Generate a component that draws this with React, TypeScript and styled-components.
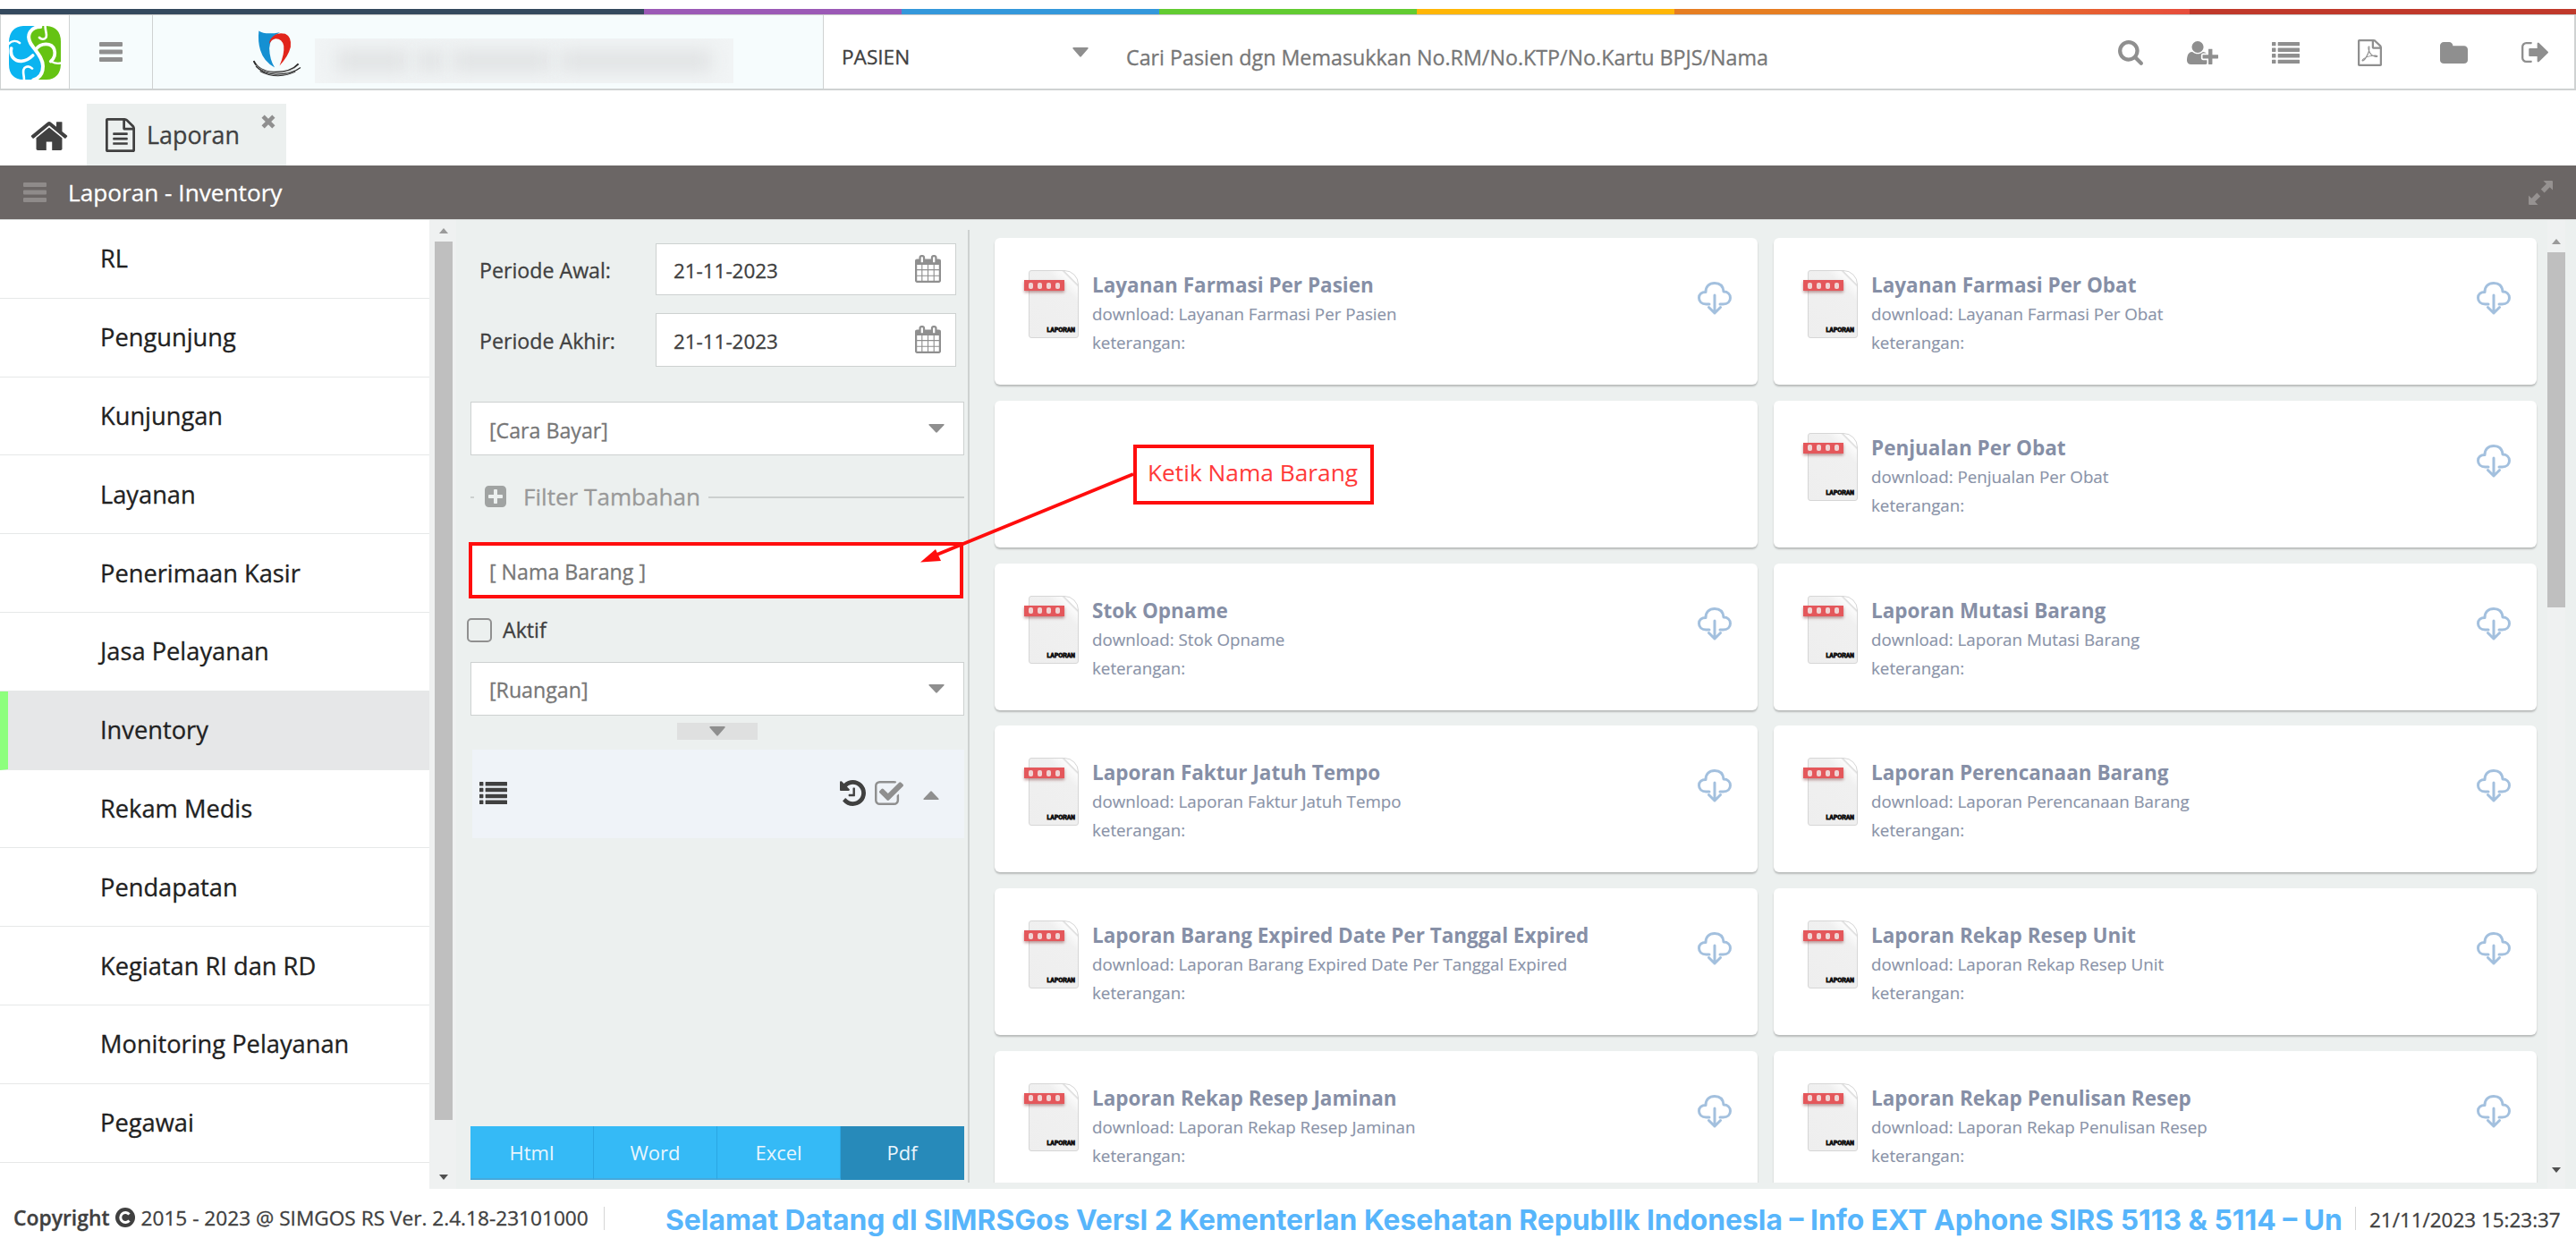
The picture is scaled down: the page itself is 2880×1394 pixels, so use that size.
import React from "react";
import styled, { createGlobalStyle } from "styled-components";

const Global = createGlobalStyle`
  *, *::before, *::after { box-sizing: border-box; }
  html, body { margin: 0; padding: 0; background: #fff; }
  body {
    font-family: "Open Sans", "Noto Sans", sans-serif;
    color: #404040;
    overflow: hidden;
    -webkit-text-stroke: 0.3px;
  }
`;

/* ---------- icons ---------- */

const PAGE =
  "M1596 380q28 28 48 76t20 88v1152q0 40-28 68t-68 28h-1344q-40 0-68-28t-28-68v-1600q0-40 28-68t68-28h896q40 0 88 20t76 48zm-444-244v376h376q-10-29-22-41l-313-313q-12-12-41-22zm384 1528v-1024h-416q-40 0-68-28t-28-68v-416h-768v1536h1280z";

const glyphs = {
  home: {
    box: "60 210 1672 1326",
    d: "M1472 992v480q0 26-19 45t-45 19h-384v-384h-256v384h-384q-26 0-45-19t-19-45v-480q0-1 .5-3t.5-3l575-474 575 474q1 2 1 6zm223-69l-62 74q-8 9-21 11h-3q-13 0-21-7l-692-577-692 577q-12 8-24 7-13-2-21-11l-62-74q-8-10-7-23.5t11-21.5l719-599q32-26 76-26t76 26l244 204v-195q0-14 9-23t23-9h192q14 0 23 9t9 23v408l219 182q10 8 11 21.5t-7 23.5z",
  },
  fileText: {
    box: "128 0 1536 1792",
    d:
      PAGE +
      "M512 800q0-14 9-23t23-9h704q14 0 23 9t9 23v64q0 14-9 23t-23 9h-704q-14 0-23-9t-9-23v-64zm736 224q14 0 23 9t9 23v64q0 14-9 23t-23 9h-704q-14 0-23-9t-9-23v-64q0-14 9-23t23-9h704zm0 256q14 0 23 9t9 23v64q0 14-9 23t-23 9h-704q-14 0-23-9t-9-23v-64q0-14 9-23t23-9h704z",
  },
  filePdf: {
    box: "128 0 1536 1792",
    d:
      PAGE +
      "M1022 1001q33 26 84 56 59-7 117-7 147 0 177 49 16 22 2 52 0 1-1 2l-2 2v1q-6 38-71 38-48 0-115-20t-130-53q-221 24-392 83-153 262-242 262-15 0-28-7l-24-12q-1-1-6-5-10-10-6-36 9-40 56-91.5t132-96.5q14-9 23 6 2 2 2 4 52-85 107-197 68-136 104-262-24-82-30.5-159.5t6.5-127.5q11-40 42-40h22q23 0 35 15 18 21 9 68-2 6-4 8 1 3 1 8v30q-2 123-14 192 55 164 146 238zm-576 411q52-24 137-158-51 40-87.5 84t-49.5 74zm398-920q-15 42-2 132 1-7 7-44 0-3 7-43 1-4 4-8-1-1-1-2-1-2-1-3-1-22-13-36 0 1-1 2v2zm-124 661q135-54 284-81-2-1-13-9.5t-16-13.5q-76-67-127-176-27 86-83 197-30 56-45 83zm646-16q-24-24-140-24 76 28 124 28 14 0 18-1 0-1-2-3z",
  },
  search: {
    box: "64 128 1664 1664",
    d: "M1216 832q0-185-131.5-316.5t-316.5-131.5-316.5 131.5-131.5 316.5 131.5 316.5 316.5 131.5 316.5-131.5 131.5-316.5zm512 832q0 52-38 90t-90 38q-54 0-90-38l-343-342q-179 124-399 124-143 0-273.5-55.5t-225-150-150-225-55.5-273.5 55.5-273.5 150-225 225-150 273.5-55.5 273.5 55.5 225 150 150 225 55.5 273.5q0 220-124 399l343 343q37 37 37 90z",
  },
  userPlus: {
    box: "0 128 2048 1536",
    d: "M704 896q-159 0-271.5-112.5t-112.5-271.5 112.5-271.5 271.5-112.5 271.5 112.5 112.5 271.5-112.5 271.5-271.5 112.5zm960 128h352q13 0 22.5 9.5t9.5 22.5v192q0 13-9.5 22.5t-22.5 9.5h-352v352q0 13-9.5 22.5t-22.5 9.5h-192q-13 0-22.5-9.5t-9.5-22.5v-352h-352q-13 0-22.5-9.5t-9.5-22.5v-192q0-13 9.5-22.5t22.5-9.5h352v-352q0-13 9.5-22.5t22.5-9.5h192q13 0 22.5 9.5t9.5 22.5v352zm-736 224q0 52 38 90t90 38h256v238q-68 50-171 50h-874q-121 0-194-69t-73-190q0-53 3.5-103.5t14-109 26.5-108.5 43-97.5 62-81 85.5-53.5 111.5-20q19 0 39 17 79 61 154.5 91.5t164.5 30.5 164.5-30.5 154.5-91.5q20-17 39-17 132 0 217 96h-223q-52 0-90 38t-38 90v192z",
  },
  list: {
    box: "0 128 1792 1408",
    d: "M32 128h192q32 0 32 32v192q0 32-32 32h-192q-32 0-32-32v-192q0-32 32-32zM32 512h192q32 0 32 32v192q0 32-32 32h-192q-32 0-32-32v-192q0-32 32-32zM32 896h192q32 0 32 32v192q0 32-32 32h-192q-32 0-32-32v-192q0-32 32-32zM32 1280h192q32 0 32 32v192q0 32-32 32h-192q-32 0-32-32v-192q0-32 32-32zM416 128h1344q32 0 32 32v192q0 32-32 32h-1344q-32 0-32-32v-192q0-32 32-32zM416 512h1344q32 0 32 32v192q0 32-32 32h-1344q-32 0-32-32v-192q0-32 32-32zM416 896h1344q32 0 32 32v192q0 32-32 32h-1344q-32 0-32-32v-192q0-32 32-32zM416 1280h1344q32 0 32 32v192q0 32-32 32h-1344q-32 0-32-32v-192q0-32 32-32z",
  },
  folder: {
    box: "64 128 1664 1408",
    d: "M1728 608v704q0 92-66 158t-158 66h-1216q-92 0-158-66t-66-158v-960q0-92 66-158t158-66h320q92 0 158 66t66 158v32h672q92 0 158 66t66 158z",
  },
  signOut: {
    box: "64 256 1632 1280",
    d: "M704 1440q0 96-32 96h-320q-119 0-203.5-84.5t-84.5-203.5v-704q0-119 84.5-203.5t203.5-84.5h320q32 0 32 32 0 96-32 96h-320q-66 0-113 47t-47 113v704q0 66 47 113t113 47h320q32 0 32 32zm992-544q0 26-19 45l-544 544q-19 19-45 19t-45-19-19-45v-288h-448q-26 0-45-19t-19-45v-384q0-26 19-45t45-19h448v-288q0-26 19-45t45-19 45 19l544 544q19 19 19 45z",
  },
  calendar: {
    box: "64 0 1664 1792",
    d: "M192 1664h288v-288h-288v288zm352 0h320v-288h-320v288zm-352-352h288v-320h-288v320zm352 0h320v-320h-320v320zm-352-384h288v-288h-288v288zm736 736h320v-288h-320v288zm-384-736h320v-288h-320v288zm768 736h288v-288h-288v288zm-384-352h320v-320h-320v320zm-352-864v-288q0-13-9.5-22.5t-22.5-9.5h-64q-13 0-22.5 9.5t-9.5 22.5v288q0 13 9.5 22.5t22.5 9.5h64q13 0 22.5-9.5t9.5-22.5zm736 864h288v-320h-288v320zm-384-384h320v-288h-320v288zm384 0h288v-288h-288v288zm32-480v-288q0-13-9.5-22.5t-22.5-9.5h-64q-13 0-22.5 9.5t-9.5 22.5v288q0 13 9.5 22.5t22.5 9.5h64q13 0 22.5-9.5t9.5-22.5zm384-64v1280q0 52-38 90t-90 38h-1408q-52 0-90-38t-38-90v-1280q0-52 38-90t90-38h128v-96q0-66 47-113t113-47h64q66 0 113 47t47 113v96h384v-96q0-66 47-113t113-47h64q66 0 113 47t47 113v96h128q52 0 90 38t38 90z",
  },
  history: {
    box: "128 128 1536 1536",
    d: "M1664 896q0 156-61 298t-164 245-245 164-298 61q-172 0-327-72.5t-264-204.5q-7-10-6.5-22.5t8.5-20.5l137-138q10-9 25-9 16 2 23 12 73 95 179 147t225 52q104 0 198.5-40.5t163.5-109.5 109.5-163.5 40.5-198.5-40.5-198.5-109.5-163.5-163.5-109.5-198.5-40.5q-98 0-188 35.5t-160 101.5l137 138q31 30 14 69-17 40-59 40h-448q-26 0-45-19t-19-45v-448q0-42 40-59 39-17 69 14l130 129q107-101 244.5-156.5t284.5-55.5q156 0 298 61t245 164 164 245 61 298zm-640-288v448q0 14-9 23t-23 9h-320q-14 0-23-9t-9-23v-64q0-14 9-23t23-9h224v-352q0-14 9-23t23-9h64q14 0 23 9t9 23z",
  },
  checkSquare: {
    box: "64 128 1663 1408",
    d: "M1472 930v318q0 119-84.5 203.5t-203.5 84.5h-832q-119 0-203.5-84.5t-84.5-203.5v-832q0-119 84.5-203.5t203.5-84.5h832q63 0 117 25 15 7 18 23 3 17-9 29l-49 49q-10 10-23 10-3 0-9-2-23-6-45-6h-832q-66 0-113 47t-47 113v832q0 66 47 113t113 47h832q66 0 113-47t47-113v-254q0-13 9-22l64-64q10-10 23-10 6 0 12 3 20 8 20 29zm231-489l-814 814q-24 24-57 24t-57-24l-430-430q-24-24-24-57t24-57l110-110q24-24 57-24t57 24l263 263 647-647q24-24 57-24t57 24l110 110q24 24 24 57t-24 57z",
  },
  plusSquare: {
    box: "128 128 1536 1536",
    d: "M1408 960v-128q0-26-19-45t-45-19h-320v-320q0-26-19-45t-45-19h-128q-26 0-45 19t-19 45v320h-320q-26 0-45 19t-19 45v128q0 26 19 45t45 19h320v320q0 26 19 45t45 19h128q26 0 45-19t19-45v-320h320q26 0 45-19t19-45zm256-544v960q0 119-84.5 203.5t-203.5 84.5h-960q-119 0-203.5-84.5t-84.5-203.5v-960q0-119 84.5-203.5t203.5-84.5h960q119 0 203.5 84.5t84.5 203.5z",
  },
  bars: {
    box: "0 0 26 22",
    d: "M1 0h24q1 0 1 1v3q0 1-1 1h-24q-1 0-1-1v-3q0-1 1-1zM1 8.5h24q1 0 1 1v3q0 1-1 1h-24q-1 0-1-1v-3q0-1 1-1zM1 17h24q1 0 1 1v3q0 1-1 1h-24q-1 0-1-1v-3q0-1 1-1z",
  },
  expand: {
    box: "0 0 27 27",
    d: "M16.500 0H26q1 0 1 1V10.500L23.700 7.300L17.600 13.400L13.800 9.600L19.900 3.500zM10.500 27H1q-1 0-1-1V16.500L3.300 19.700L9.400 13.600L13.200 17.400L7.100 23.500z",
  },
  times: {
    box: "0 0 16 16",
    d: "M3.700 .5L8 4.800L12.300 .5L15.500 3.700L11.200 8L15.500 12.300L12.300 15.500L8 11.200L3.700 15.500L.5 12.300L4.800 8L.5 3.700z",
  },
  down: { box: "0 0 18 11", d: "M1 0h16q1 .5 .4 1.400L9.800 10.300q-.8 .8-1.600 0L.6 1.400Q0 .5 1 0z" },
  up: { box: "0 0 18 11", d: "M1 11h16q1-.5 .4-1.400L9.800 .7q-.8-.8-1.600 0L.6 9.600Q0 10.500 1 11z" },
  scrollUp: { box: "0 0 10 6", d: "M0 6L5 0L10 6z" },
  scrollDown: { box: "0 0 10 6", d: "M0 0L5 6L10 0z" },
};

const Svg = styled.svg<{ $w: number; $h: number; $c: string }>`
  display: block;
  flex: none;
  width: ${(p) => p.$w}px;
  height: ${(p) => p.$h}px;
  fill: ${(p) => p.$c};
`;

function Icon({ name, w, h, color = "#8f8f8f" }: { name: keyof typeof glyphs; w: number; h: number; color?: string }) {
  return (
    <Svg $w={w} $h={h} $c={color} viewBox={glyphs[name].box} preserveAspectRatio="none">
      <path d={glyphs[name].d} />
    </Svg>
  );
}

function SimgosLogo() {
  return (
    <Svg $w={58} $h={60} $c="none" viewBox="30 57 174 180">
      <path fill="#0bb4f0" d="M78 57H122Q92 66 92 96Q94 118 112 134Q140 165 140 195Q138 225 112 237H78Q30 235 30 185V110Q32 60 78 57z" />
      <path fill="#65c313" d="M122 57H156Q204 60 204 110V185Q202 235 156 237H112Q142 222 142 192Q138 160 112 134Q92 116 92 96Q94 66 122 57z" />
      <g fill="none" stroke="#fff" strokeLinecap="round">
        <path d="M136 60C102 60 88 88 102 114C114 136 144 160 144 192C144 216 132 232 112 238" strokeWidth="12" />
        <path d="M26 120C40 104 56 106 66 114" strokeWidth="8" />
        <path d="M38 132C32 160 50 176 72 175C90 174 100 166 110 156" strokeWidth="11" />
        <path d="M120 136C136 112 174 112 182 136C188 156 180 168 170 176" strokeWidth="11" />
        <path d="M172 176C186 184 198 184 208 180" strokeWidth="7" />
        <path d="M152 54C150 72 160 86 154 96C148 104 138 102 132 96" strokeWidth="8" />
        <path d="M80 242C84 226 72 210 82 198C92 190 102 194 108 200" strokeWidth="8" />
      </g>
    </Svg>
  );
}

function HospitalLogo() {
  return (
    <Svg $w={54} $h={52} $c="none" viewBox="849 73 161 154">
      <path fill="#1590d2" d="M868 74Q888 88 938 79Q904 96 903 132Q904 170 921 196Q884 176 873 138Q864 108 868 74z" />
      <path fill="#e1251b" d="M908 100Q926 76 956 84Q978 94 974 128Q966 160 937 190Q954 152 951 124Q946 100 924 100Q910 102 903 118Q903 106 908 100z" />
      <g fill="none" stroke="#2b2b2b">
        <path strokeWidth="6" d="M851 174Q866 208 916 212Q975 214 1000 184" />
        <path strokeWidth="3.500" d="M858 192Q880 216 924 219Q980 218 1007 196" />
        <path strokeWidth="3" d="M872 208Q900 224 932 224Q966 222 990 210" />
      </g>
      <path fill="none" stroke="#fff" strokeWidth="1.500" d="M858 188Q880 212 925 214Q972 212 1000 190" />
    </Svg>
  );
}

function CloudDownload() {
  return (
    <Svg $w={38} $h={37} $c="none" viewBox="0 0 38 37">
      <g fill="none" stroke="#a3c0de" strokeWidth="3" strokeLinecap="round" strokeLinejoin="round">
        <path d="M13 25H9.500C4.500 25 1.500 22 1.500 18C1.500 14 4.500 11.500 9 11.500C9 5 13 1.500 19 1.500C25 1.500 28.500 5 29 11C33.500 11 36.500 14 36.500 18C36.500 22 33.500 25 28.500 25H25" />
        <path d="M19 15V35M12.500 28.500L19 35L25.500 28.500" />
      </g>
    </Svg>
  );
}

/* ---------- page frame ---------- */

const Page = styled.div`
  width: 2880px;
  height: 1394px;
  display: flex;
  flex-direction: column;
  background: #fff;
`;

const RainbowStrip = styled.div`
  flex: none;
  height: 17px;
  border-top: 10px solid #fff;
  border-bottom: 1px solid #c9c9c9;
  background: linear-gradient(
    90deg,
    #34495e 25%, #9b59b6 25%, #9b59b6 35%, #3498db 35%, #3498db 45%, #62cb31 45%, #62cb31 55%,
    #ffb606 55%, #ffb606 65%, #e67e22 65%, #e67e22 75%, #e74c3c 85%, #c0392b 85%
  );
`;

const Header = styled.header`
  flex: none;
  display: flex;
  height: 84px;
  border: solid #cfd2d2;
  border-width: 0 2px 2px 1px;
`;

const HeaderCell = styled.div<{ $w: number; $tint?: boolean }>`
  flex: none;
  width: ${(p) => p.$w}px;
  display: flex;
  align-items: center;
  justify-content: center;
  border-right: 1px solid #cfd2d2;
  background: ${(p) => (p.$tint ? "#f6fcfd" : "#fff")};
`;

const LogoCell = styled(HeaderCell)`
  padding-top: 2px;
`;

const Brand = styled(HeaderCell)`
  justify-content: flex-start;
  padding: 3px 0 0 112px;
  gap: 15px;
`;

const BlurredName = styled.div`
  width: 468px;
  height: 50px;
  margin-top: 16px;
  overflow: hidden;
  background: #f1f4f5;
  display: flex;
  align-items: center;
  justify-content: center;
  gap: 10px;
`;

const Smudge = styled.span<{ $w: number }>`
  width: ${(p) => p.$w}px;
  height: 24px;
  background: #e0e2e3;
  filter: blur(10px);
`;

const SearchKind = styled.div`
  width: 324px;
  display: flex;
  align-items: center;
  justify-content: space-between;
  padding: 0 28px 0 20px;
  font-size: 22.600px;
  color: #404040;
`;

const Lowered = styled.span<{ $y: number }>`
  padding-top: ${(p) => p.$y}px;
`;

const SearchBox = styled.div`
  flex: 1;
  display: flex;
  align-items: center;
  padding: 11px 0 0 14px;
  font-size: 23.280px;
  color: #777;
`;

const Tools = styled.nav`
  display: flex;
  padding-top: 1px;
`;

const Tool = styled.div<{ $w: number }>`
  width: ${(p) => p.$w}px;
  display: flex;
  align-items: center;
  justify-content: center;
`;

const Tabs = styled.div`
  flex: none;
  height: 84px;
  display: flex;
  align-items: flex-end;
`;

const HomeTab = styled.div`
  width: 97px;
  height: 69px;
  display: flex;
  align-items: center;
  padding: 2px 0 0 34px;
`;

const Tab = styled.div`
  width: 223px;
  height: 69px;
  display: flex;
  align-items: center;
  padding-left: 21px;
  background: #ecf0ef;
  font-size: 26.900px;
  color: #404040;
`;

const TabLabel = styled.span`
  width: 128px;
  margin-left: 13px;
`;

const TabClose = styled.span`
  align-self: flex-start;
  padding-top: 12px;
`;

const TitleBar = styled.div`
  flex: none;
  height: 60px;
  display: flex;
  align-items: center;
  padding: 0 26px 0 26px;
  background: #6b6665;
  color: #fff;
  font-size: 26.200px;
`;

const Title = styled.span`
  flex: 1;
  margin-left: 24px;
`;

const Body = styled.div`
  flex: none;
  height: 1084px;
  display: flex;
  background: #ecf0ef;
  border-top: 1px solid #d9dcdb;
  overflow: hidden;
`;

/* ---------- side menu ---------- */

const Menu = styled.ul`
  flex: none;
  width: 480px;
  margin: 0;
  padding: 0;
  list-style: none;
  background: #fff;
`;

const MenuItem = styled.li<{ $active?: boolean }>`
  height: 87.800px;
  display: flex;
  align-items: center;
  padding: 0 0 1px ${(p) => (p.$active ? 103 : 112)}px;
  border-left: ${(p) => (p.$active ? "9px solid #8dff7d" : "0")};
  border-bottom: 1px solid #e6e8e8;
  background: ${(p) => (p.$active ? "#e6e7e8" : "#fff")};
  font-size: 27.250px;
  color: #212121;
`;

const Scrollbar = styled.div<{ $w: number; $pad: string }>`
  flex: none;
  width: ${(p) => p.$w}px;
  display: flex;
  flex-direction: column;
  align-items: center;
  padding: ${(p) => p.$pad};
  background: #eff1f1;
`;

const Thumb = styled.div<{ $h: number }>`
  width: 20px;
  height: ${(p) => p.$h}px;
  margin: 9px 0 auto;
  background: #bfbfbf;
`;

/* ---------- filter panel ---------- */

const Filters = styled.section`
  flex: none;
  width: 574px;
  height: 1065px;
  margin-top: 11px;
  padding: 15px 4px 3px 16px;
  border-right: 2px solid #cdd1d0;
  display: flex;
  flex-direction: column;
`;

const DateRow = styled.div<{ $h: number; $gap: number }>`
  height: ${(p) => p.$h}px;
  margin-bottom: ${(p) => p.$gap}px;
  display: flex;
  align-items: center;
  padding: 0 9px 0 10px;
  font-size: 23.200px;
`;

const DateLabel = styled.label`
  flex: 1;
  padding-top: 2px;
`;

const DateField = styled.div`
  width: 336px;
  height: 100%;
  display: flex;
  align-items: center;
  justify-content: space-between;
  padding: 2px 16px 0 19px;
  border: 1px solid #cdd1d0;
  background: #fff;
  font-size: 22.400px;
`;

const CalendarSlot = styled.span`
  padding-bottom: 4px;
`;

const Field = styled.div<{ $gap: number }>`
  flex: none;
  height: 60px;
  margin-bottom: ${(p) => p.$gap}px;
  display: flex;
  align-items: center;
  justify-content: space-between;
  padding: 0 21px 0 20px;
  border: 1px solid #cdd1d0;
  background: #fff;
  font-size: 23.200px;
  color: #777;
`;

const HighlightedField = styled(Field)`
  height: 63px;
  margin-left: -2px;
  margin-right: 1px;
  padding-left: 19px;
  border: 4px solid #ff0d0d;
`;

const Legend = styled.div`
  flex: none;
  height: 36px;
  margin: 29px 0 32px;
  display: flex;
  align-items: center;
  font-size: 26.100px;
  color: #999;
`;

const Rule = styled.span<{ $w?: number }>`
  ${(p) => (p.$w ? `width: ${p.$w}px;` : "flex: 1;")}
  height: 2px;
  background: #ccd0cf;
`;

const LegendText = styled.span`
  margin: 0 9px 0 19px;
  padding-bottom: 2px;
`;

const LegendIcon = styled.span`
  margin-left: 12px;
  padding-bottom: 2px;
`;

const CheckRow = styled.label`
  flex: none;
  height: 28px;
  margin: 21px 0 22px -4px;
  display: flex;
  align-items: center;
  gap: 12px;
  font-size: 23.200px;
`;

const Box = styled.span`
  width: 28px;
  height: 27px;
  border: 2px solid #909090;
  border-radius: 5px;
`;

const Collapse = styled.div`
  flex: none;
  width: 90px;
  height: 19px;
  margin: 8px auto 11px;
  display: flex;
  align-items: center;
  justify-content: center;
  background: #dfe0e0;
`;

const ListPanel = styled.div`
  flex: none;
  height: 99px;
  margin-left: 2px;
  display: flex;
  align-items: center;
  padding: 0 28px 3px 8px;
  background: #eff3f8;
`;

const Spacer = styled.span`
  flex: 1;
`;

const PanelIcon = styled.span<{ $l: number; $t?: number }>`
  margin-left: ${(p) => p.$l}px;
  padding-top: ${(p) => p.$t ?? 0}px;
`;

const Formats = styled.div`
  flex: none;
  height: 60px;
  margin-top: auto;
  display: flex;
`;

const Format = styled.button<{ $on?: boolean }>`
  flex: 1;
  border: 0;
  border-right: 1px solid ${(p) => (p.$on ? "#278aba" : "#2aa6e3")};
  border-bottom: 2px solid ${(p) => (p.$on ? "#278aba" : "#45a9dc")};
  background: ${(p) => (p.$on ? "#278aba" : "#35baf6")};
  color: #e9f6fd;
  font-family: inherit;
  font-size: 22px;
  -webkit-text-stroke: 0;
`;

/* ---------- report cards ---------- */

const Reports = styled.section`
  flex: none;
  width: 1764px;
  height: 1076px;
  padding: 20px 12px 0 28px;
  display: grid;
  grid-template-columns: 853px 853px;
  grid-auto-rows: 164px;
  gap: 17.800px 18px;
  overflow: hidden;
`;

const Card = styled.article`
  display: flex;
  padding: 36px 29px 0 34px;
  background: #fff;
  border-radius: 6px;
  box-shadow: 0 2px 2px rgba(0, 0, 0, 0.22);
`;

const CardText = styled.div`
  flex: 1;
  padding: 1px 0 0 13px;
  color: #8a93a8;
`;

const CardTitle = styled.h3`
  margin: 0;
  font-size: 22.500px;
  line-height: 32px;
  font-weight: 700;
  color: #868fa6;
  -webkit-text-stroke: 0;
`;

const CardLine = styled.p`
  margin: 0;
  font-size: 18.750px;
  line-height: 32px;
  -webkit-text-stroke: 0.150px;
`;

const CloudSlot = styled.span`
  padding-top: 13px;
`;

const Sheet = styled.div`
  flex: none;
  width: 62px;
  height: 76px;
  padding-left: 4px;
`;

const SheetPage = styled.div`
  width: 56px;
  height: 76px;
  display: flex;
  flex-direction: column;
  justify-content: space-between;
  border: 1px solid #d6d6d6;
  border-radius: 3px;
  background: linear-gradient(225deg, #fff 10px, #d9d9d9 11px, #fbfbfb 13px, #f0f0f0 24px, #eeeeee);
  border-top-right-radius: 16px;
`;

const SheetBand = styled.div`
  width: 45px;
  height: 12px;
  margin: 10px 0 0 -6px;
  display: flex;
  align-items: center;
  justify-content: center;
  gap: 5px;
  background: #e4575b;
  box-shadow: 0 2px 3px rgba(120, 40, 40, 0.45);
`;

const Dot = styled.i`
  width: 5px;
  height: 7px;
  border-radius: 2px;
  background: #f0d4d4;
`;

const SheetLabel = styled.span`
  padding: 0 3px 4px 0;
  text-align: right;
  font: 700 6.400px/8px "Liberation Sans", Arial, sans-serif;
  -webkit-text-stroke: 0.800px #111;
  color: #111;
`;

/* ---------- annotation ---------- */

const Canvas = styled.div`
  position: relative;
`;

const Callout = styled.div`
  position: absolute;
  left: 1267px;
  top: 497px;
  width: 269px;
  height: 67px;
  display: flex;
  align-items: center;
  padding: 0 0 6px 12px;
  border: 4px solid #ff0d0d;
  background: #fff;
  font-size: 26.300px;
  color: #ff3a3a;
  white-space: nowrap;
  -webkit-text-stroke: 0;
`;

const Arrow = styled.svg`
  position: absolute;
  left: 1020px;
  top: 520px;
  width: 250px;
  height: 120px;
`;

/* ---------- footer ---------- */

const Footer = styled.footer`
  flex: none;
  height: 65px;
  display: flex;
  align-items: center;
  padding: 0 15px;
  background: #fff;
  font-size: 22.650px;
  color: #404040;
  white-space: nowrap;
`;

const Copyright = styled.div`
  width: 661px;
  display: flex;
  align-items: center;
  padding-bottom: 1px;
  border-right: 1px solid #d5d5d5;
  height: 26px;
`;

const Strong = styled.b`
  font-weight: 600;
  font-size: 22.900px;
  margin-right: 6px;
`;

const Years = styled.span`
  margin-left: 7px;
`;

const Marquee = styled.div`
  width: 1957px;
  padding: 4px 0 0 68px;
  overflow: hidden;
  font-family: Inter, "Open Sans", sans-serif;
  font-weight: 700;
  font-size: 31.840px;
  color: #57b5fb;
  -webkit-text-stroke: 0;
`;

const Clock = styled.div`
  height: 26px;
  display: flex;
  align-items: center;
  padding: 4px 0 0 15px;
  border-left: 1px solid #d5d5d5;
  font-size: 22.450px;
`;

const menu = ["RL", "Pengunjung", "Kunjungan", "Layanan", "Penerimaan Kasir", "Jasa Pelayanan", "Inventory", "Rekam Medis", "Pendapatan", "Kegiatan RI dan RD", "Monitoring Pelayanan", "Pegawai"];

const reports = [
  "Layanan Farmasi Per Pasien", "Layanan Farmasi Per Obat",
  "", "Penjualan Per Obat",
  "Stok Opname", "Laporan Mutasi Barang",
  "Laporan Faktur Jatuh Tempo", "Laporan Perencanaan Barang",
  "Laporan Barang Expired Date Per Tanggal Expired", "Laporan Rekap Resep Unit",
  "Laporan Rekap Resep Jaminan", "Laporan Rekap Penulisan Resep",
];

function ReportCard({ name }: { name: string }) {
  if (!name) return <Card />;
  return (
    <Card>
      <Sheet>
        <SheetPage>
          <SheetBand><Dot /><Dot /><Dot /><Dot /></SheetBand>
          <SheetLabel>LAPORAN</SheetLabel>
        </SheetPage>
      </Sheet>
      <CardText>
        <CardTitle>{name}</CardTitle>
        <CardLine>download: {name}</CardLine>
        <CardLine>keterangan:</CardLine>
      </CardText>
      <CloudSlot><CloudDownload /></CloudSlot>
    </Card>
  );
}

export default function App() {
  return (
    <Canvas>
      <Global />
      <Page>
        <RainbowStrip />
        <Header>
          <LogoCell $w={77}><SimgosLogo /></LogoCell>
          <HeaderCell $w={93} $tint><Icon name="bars" w={26} h={22} /></HeaderCell>
          <Brand $w={750} $tint>
            <HospitalLogo />
            <BlurredName>
              <Smudge $w={80} /><Smudge $w={30} /><Smudge $w={110} /><Smudge $w={170} />
            </BlurredName>
          </Brand>
          <SearchKind>
            <Lowered $y={11}>PASIEN</Lowered>
            <Icon name="down" w={18} h={11} />
          </SearchKind>
          <SearchBox>Cari Pasien dgn Memasukkan No.RM/No.KTP/No.Kartu BPJS/Nama</SearchBox>
          <Tools>
            <Tool $w={71}><Icon name="search" w={28} h={28} /></Tool>
            <Tool $w={91}><Icon name="userPlus" w={35} h={26} /></Tool>
            <Tool $w={94}><Icon name="list" w={31} h={24} /></Tool>
            <Tool $w={94}><Icon name="filePdf" w={27} h={30} /></Tool>
            <Tool $w={94}><Icon name="folder" w={31} h={24} /></Tool>
            <Tool $w={88}><Icon name="signOut" w={30} h={23} /></Tool>
          </Tools>
        </Header>
        <Tabs>
          <HomeTab><Icon name="home" w={42} h={33} color="#404040" /></HomeTab>
          <Tab>
            <Icon name="fileText" w={33} h={38} color="#404040" />
            <TabLabel>Laporan</TabLabel>
            <TabClose><Icon name="times" w={16} h={16} /></TabClose>
          </Tab>
        </Tabs>
        <TitleBar>
          <Icon name="bars" w={26} h={22} color="#8f8b8a" />
          <Title>Laporan - Inventory</Title>
          <Icon name="expand" w={27} h={27} color="#969291" />
        </TitleBar>
        <Body>
          <Menu>
            {menu.map((m) => (
              <MenuItem key={m} $active={m === "Inventory"}>{m}</MenuItem>
            ))}
          </Menu>
          <Scrollbar $w={30} $pad="9px 0 10px 2px">
            <Icon name="scrollUp" w={10} h={6} color="#9a9a9a" />
            <Thumb $h={982} />
            <Icon name="scrollDown" w={10} h={6} color="#505050" />
          </Scrollbar>
          <Filters>
            <DateRow $h={58} $gap={20}>
              <DateLabel>Periode Awal:</DateLabel>
              <DateField>21-11-2023<CalendarSlot><Icon name="calendar" w={29} h={31} /></CalendarSlot></DateField>
            </DateRow>
            <DateRow $h={60} $gap={39}>
              <DateLabel>Periode Akhir:</DateLabel>
              <DateField>21-11-2023<CalendarSlot><Icon name="calendar" w={29} h={31} /></CalendarSlot></DateField>
            </DateRow>
            <Field $gap={0}><Lowered $y={3}>[Cara Bayar]</Lowered><Icon name="down" w={18} h={10} /></Field>
            <Legend>
              <Rule $w={4} />
              <LegendIcon><Icon name="plusSquare" w={24} h={24} color="#a0a3a2" /></LegendIcon>
              <LegendText>Filter Tambahan</LegendText>
              <Rule />
            </Legend>
            <HighlightedField $gap={0}><Lowered $y={2}>[ Nama Barang ]</Lowered></HighlightedField>
            <CheckRow><Box />Aktif</CheckRow>
            <Field $gap={0}><Lowered $y={1}>[Ruangan]</Lowered><Icon name="down" w={18} h={10} /></Field>
            <Collapse><Icon name="down" w={18} h={11} /></Collapse>
            <ListPanel>
              <Icon name="list" w={31} h={25} color="#404040" />
              <Spacer />
              <Icon name="history" w={29} h={29} color="#404040" />
              <PanelIcon $l={10}><Icon name="checkSquare" w={32} h={27} /></PanelIcon>
              <PanelIcon $l={22} $t={5}><Icon name="up" w={18} h={10} /></PanelIcon>
            </ListPanel>
            <Formats>
              <Format>Html</Format>
              <Format>Word</Format>
              <Format>Excel</Format>
              <Format $on>Pdf</Format>
            </Formats>
          </Filters>
          <Reports>
            {reports.map((r, i) => <ReportCard key={i} name={r} />)}
          </Reports>
          <Scrollbar $w={20} $pad="21px 0 18px">
            <Icon name="scrollUp" w={10} h={6} color="#9a9a9a" />
            <Thumb $h={397} />
            <Icon name="scrollDown" w={10} h={6} color="#505050" />
          </Scrollbar>
        </Body>
        <Footer>
          <Copyright>
            <Strong>Copyright</Strong>
            <Svg $w={22} $h={22} $c="#404040" viewBox="0 0 22 22">
              <circle cx="11" cy="11" r="11" />
              <path d="M15.500 7.500A5.500 5.500 0 1 0 15.500 14.500" fill="none" stroke="#fff" strokeWidth="3" />
            </Svg>
            <Years>2015 - 2023 @ SIMGOS RS Ver. 2.4.18-23101000</Years>
          </Copyright>
          <Marquee>
            Selamat Datang dl SIMRSGos Versl 2 Kementerlan Kesehatan Republlk Indonesla – Info EXT Aphone SIRS 5113 &amp; 5114 – Un
          </Marquee>
          <Clock>21/11/2023 15:23:37</Clock>
        </Footer>
      </Page>
      <Arrow viewBox="1020 520 250 120">
        <path d="M1267 530L1045 621" stroke="#ff0d0d" strokeWidth="4" fill="none" />
        <path d="M1029 628.500L1046 614L1052 627z" fill="#ff0d0d" />
      </Arrow>
      <Callout>Ketik Nama Barang</Callout>
    </Canvas>
  );
}
